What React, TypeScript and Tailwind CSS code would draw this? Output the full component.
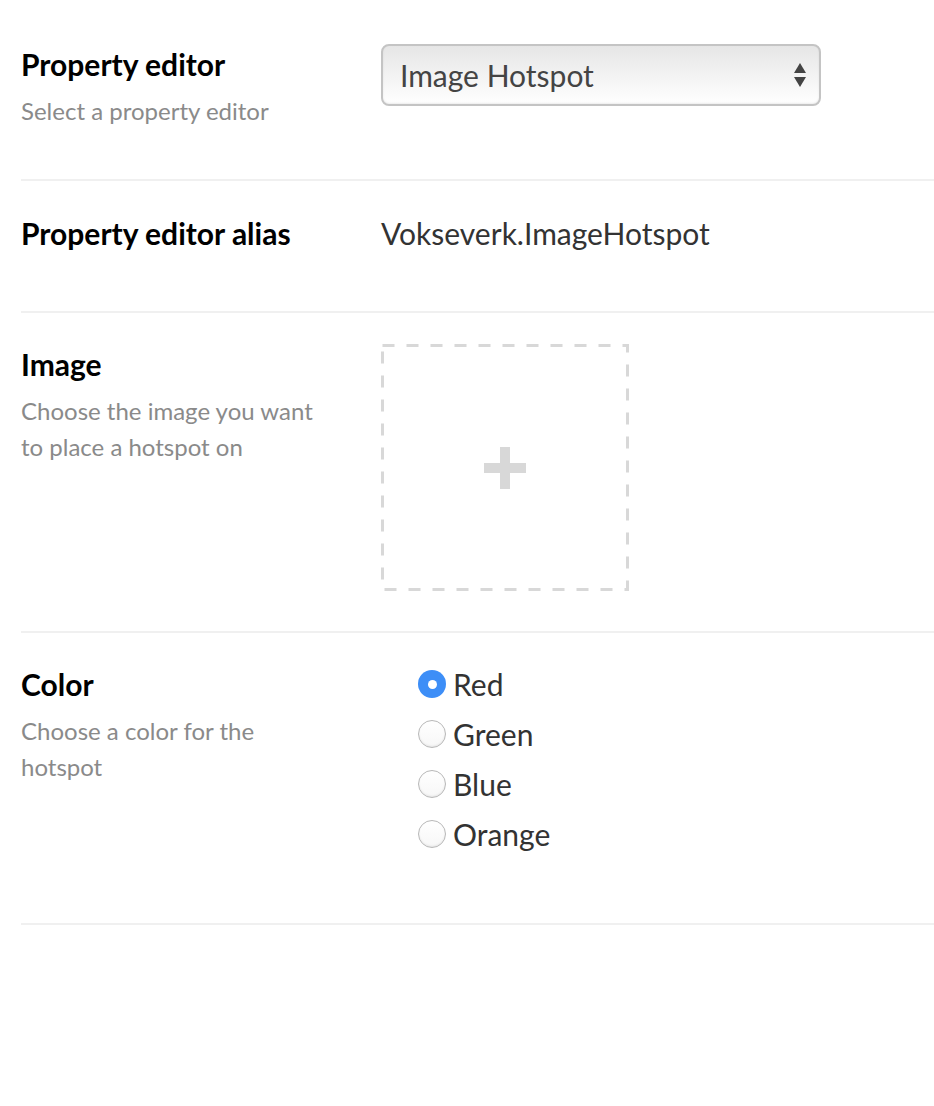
import React, { useState } from "react";

const colors = ["Red", "Green", "Blue", "Orange"];

function Label({ title, hint }: { title: string; hint?: string }) {
  return (
    <div className="w-[360px] shrink-0 pr-6">
      <div className="text-[30px] font-bold leading-[40px] text-black">{title}</div>
      {hint && <p className="mt-[9px] w-[305px] text-[24px] leading-[36px] text-[#8a8a8a]">{hint}</p>}
    </div>
  );
}

export default function App() {
  const [color, setColor] = useState("Red");

  return (
    <div className="min-h-[1106px] bg-white pl-[21px] font-['Lato','Liberation_Sans',sans-serif]">
      <div className="flex h-[181px] border-b-2 border-[#f0f0f0] pt-[44px]">
        <Label title="Property editor" hint="Select a property editor" />
        <div className="relative flex h-[62px] w-[440px] items-center rounded-[8px] border-2 border-[#c4c4c4] bg-gradient-to-b from-[#e6e6e6] to-white pl-[17px] shadow-[inset_0_-1px_2px_rgba(0,0,0,0.08)]">
          <span className="text-[30px] text-[#444]">Image Hotspot</span>
          <svg className="absolute right-[12px] top-1/2 -translate-y-1/2" width="14" height="30" viewBox="0 0 14 30">
            <path d="M7 3 L13 13 L1 13 Z" fill="#444" />
            <path d="M1 17 L13 17 L7 27 Z" fill="#444" />
          </svg>
        </div>
      </div>

      <div className="flex h-[132px] border-b-2 border-[#f0f0f0] pt-[32px]">
        <Label title="Property editor alias" />
        <div className="text-[30px] leading-[40px] text-[#333]">Vokseverk.ImageHotspot</div>
      </div>

      <div className="flex h-[320px] border-b-2 border-[#f0f0f0] pt-[31px]">
        <Label title="Image" hint="Choose the image you want to place a hotspot on" />
        <button className="relative flex h-[247px] w-[248px] items-center justify-center">
          {/* long dashed outline, a CSS dashed border gives dashes too short */}
          <svg className="absolute inset-0" width="248" height="247" viewBox="0 0 248 247">
            <rect x="1.5" y="1.5" width="245" height="244" fill="none" stroke="#d8d8d8" strokeWidth="3" strokeDasharray="12 12" strokeDashoffset="0" />
          </svg>
          <svg width="42" height="42" viewBox="0 0 42 42">
            <rect x="16" y="0" width="10" height="42" fill="#d8d8d8" />
            <rect x="0" y="16" width="42" height="10" fill="#d8d8d8" />
          </svg>
        </button>
      </div>

      <div className="flex h-[292px] border-b-2 border-[#f0f0f0] pt-[31px]">
        <Label title="Color" hint="Choose a color for the hotspot" />
        <div className="flex flex-col gap-[10px] pl-[37px]">
          {colors.map((c) => (
            <label key={c} className="flex h-[40px] cursor-pointer items-center gap-[7px]">
              <input type="radio" name="color" className="sr-only" checked={color === c} onChange={() => setColor(c)} />
              {color === c ? (
                <span className="flex h-[28px] w-[28px] items-center justify-center rounded-full bg-[#3d8ef7]">
                  <span className="h-[9px] w-[9px] rounded-full bg-white" />
                </span>
              ) : (
                <span className="h-[28px] w-[28px] rounded-full border border-[#b8b8b8] bg-gradient-to-b from-white to-[#f7f7f7] shadow-[inset_0_-1px_2px_rgba(0,0,0,0.08)]" />
              )}
              <span className="text-[30px] leading-[40px] text-[#333]">{c}</span>
            </label>
          ))}
        </div>
      </div>
    </div>
  );
}
